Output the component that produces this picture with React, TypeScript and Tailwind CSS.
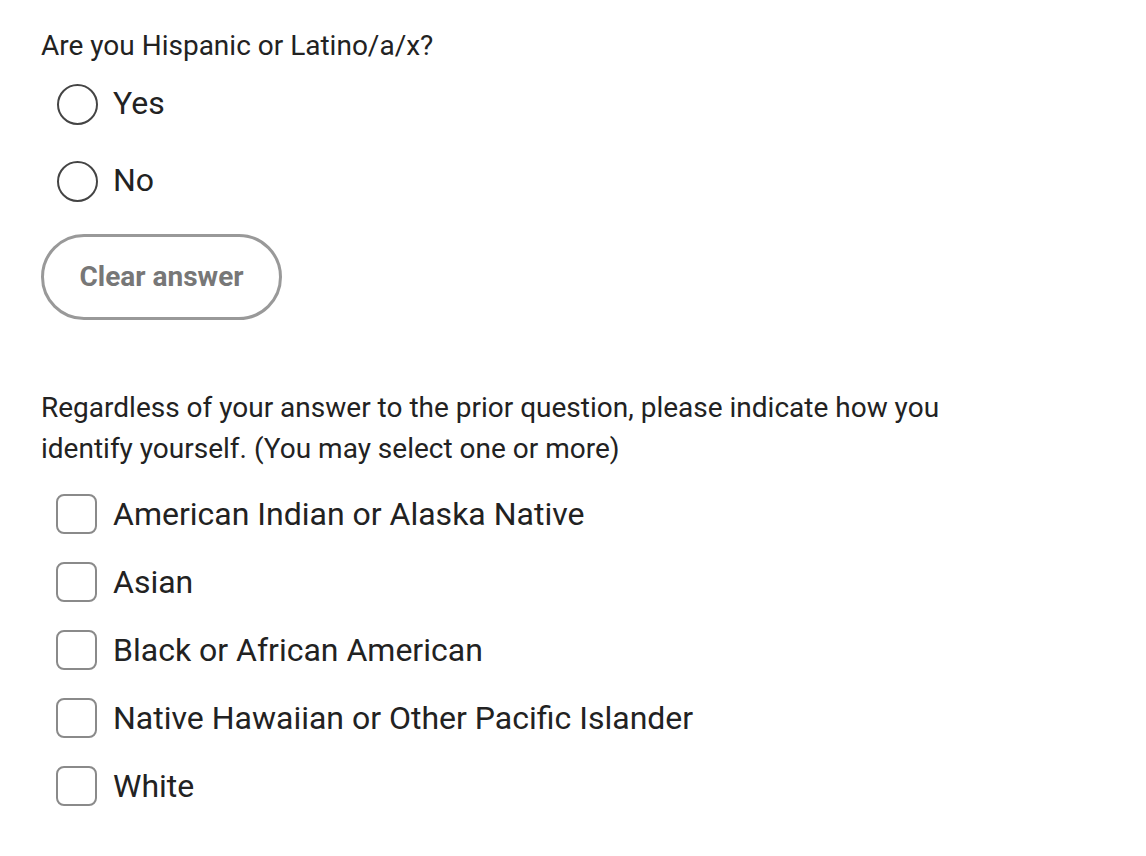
import React from "react";

const radios = ["Yes", "No"];
const checks = [
  "American Indian or Alaska Native",
  "Asian",
  "Black or African American",
  "Native Hawaiian or Other Pacific Islander",
  "White",
];

export default function App() {
  return (
    <div
      className="min-h-[856px] bg-white pl-[41px] pt-[25px] text-[#222222]"
      style={{ fontFamily: "Roboto, 'Liberation Sans', sans-serif" }}
    >
      <p className="text-[28px] leading-[41px]">Are you Hispanic or Latino/a/x?</p>
      <div className="flex flex-col">
        {radios.map((r) => (
          <label key={r} className="flex h-[77px] items-center pl-[16px]">
            <span className="box-border h-[41px] w-[41px] shrink-0 rounded-full border-2 border-[#444444] bg-white" />
            <span className="ml-[15px] -mt-[3px] text-[32px] leading-none">{r}</span>
          </label>
        ))}
      </div>
      <button
        type="button"
        className="mt-[14px] box-border flex h-[86px] w-[241px] items-center justify-center rounded-full border-[3px] border-[#999999] bg-white text-[28px] font-bold text-[#777777]"
      >
        Clear answer
      </button>
      <p className="mt-[67px] w-[920px] text-[28px] leading-[41px]">
        Regardless of your answer to the prior question, please indicate how you identify yourself. (You may select one or more)
      </p>
      <div className="mt-[11px] flex flex-col">
        {checks.map((c) => (
          <label key={c} className="flex h-[68px] items-center pl-[15px]">
            <span className="box-border h-[40px] w-[41px] shrink-0 rounded-[8px] border-2 border-[#8a8a8a] bg-white" />
            <span className="ml-[16px] text-[32px] leading-none">{c}</span>
          </label>
        ))}
      </div>
    </div>
  );
}
